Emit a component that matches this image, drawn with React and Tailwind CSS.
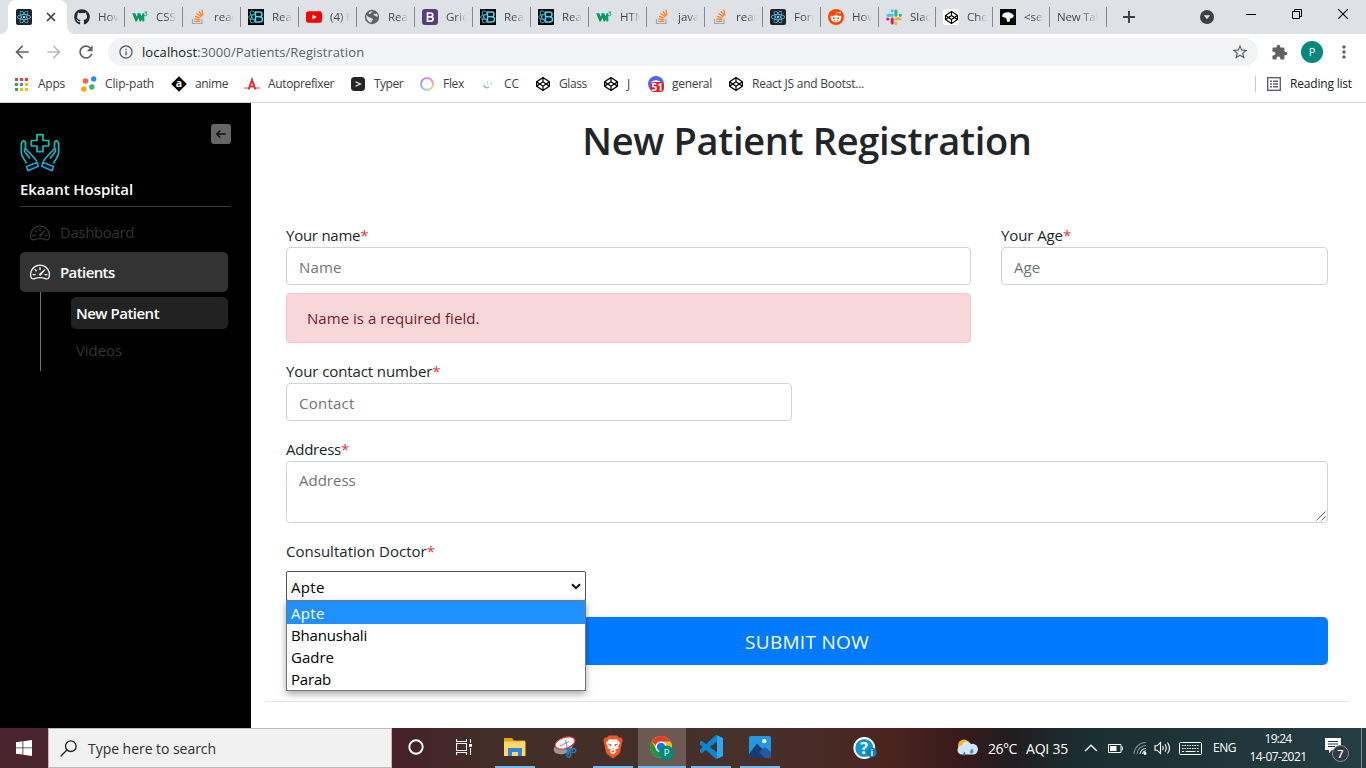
import { BsSpeedometer2 } from "react-icons/bs";
import { FaReact, FaGithub, FaRedditAlien, FaCodepen } from "react-icons/fa";
import { MdArrowBack, MdArrowForward, MdRefresh, MdInfoOutline, MdStarBorder, MdExtension, MdMoreVert } from "react-icons/md";

const ReactIcon = () => (
  <span className="flex size-4 items-center justify-center rounded-[2px] bg-[#20232a]">
    <FaReact className="size-[14px] text-[#61dafb]" />
  </span>
);
const GithubIcon = () => <FaGithub className="size-4 text-[#24292e]" />;
const W3Icon = () => (
  <svg viewBox="0 0 16 16" className="size-4">
    <path d="M.2 4.200H3.300L4.600 7.800 5.700 5.400 5.200 4.200H8.200L9.300 7.300 10.800 4.200H12.300V12.500H10.300V9.800L9 12.500H7.700L6.400 9 4.800 12.500H3.500z" fill="#059862" />
    <path d="M12.600 3h2.300l-1.200 1.400c1.600.1 1.500 2.400-.1 2.400-.8 0-1.200-.4-1.300-.9" fill="none" stroke="#059862" strokeWidth=".9" />
  </svg>
);
const StackIcon = () => (
  <svg viewBox="0 0 16 16" className="size-4" fill="none">
    <path d="M2.500 10v4.500h9.500V10" stroke="#a5a8aa" strokeWidth="1.200" />
    <path d="M4.300 12.300h6M4.400 9.900l5.900.7M5 7.300l5.600 1.700M6.500 4.500l5 3.100M8.800 2.200l3.500 4.600M11.800.7l1.200 5.500" stroke="#f48024" strokeWidth="1.250" />
  </svg>
);
const ReactBootstrapIcon = () => (
  <svg viewBox="0 0 16 16" className="size-4" fill="none" stroke="#41d8f5">
    <rect width="16" height="16" fill="#000" stroke="none" />
    <path d="M7.500 3h4.300c3 0 3 4.600 0 4.700 3.600.2 3.600 5.300 0 5.300H7.500zM8 7.800h4" strokeWidth="1.500" />
    <path d="M7 5.800C3.500 5.300.8 6.500.8 8s2.700 2.700 6.200 2.300M6.500 3.300C4.800 1.700 3.200 1.500 2.500 2.500c-.9 1.300.3 4.700 3 8 1 1.300 1.700 2 2.200 2.300M7 3.500C5.400 4.800 3.600 7.500 2.800 10c-.8 2.600-.2 4 1 3.800C5 13.700 6 12.800 7 11.800" strokeWidth=".9" />
  </svg>
);
const YoutubeIcon = () => (
  <span className="flex size-4 items-center justify-center">
    <svg viewBox="0 0 16 12" className="h-3 w-4"><rect width="16" height="11.500" y=".3" rx="2.500" fill="#f00" /><path d="M6.300 3.500v5l4.400-2.500z" fill="#fff" /></svg>
  </span>
);
const GlobeIcon = () => (
  <svg viewBox="0 0 16 16" className="size-4">
    <circle cx="8" cy="8" r="7.200" fill="#5f6368" />
    <path d="M2.300 6.300 5 8.200c1.500.3 2 .8 3.300 1.200 1 .4.900 1.400-.2 1.900L7.300 13.700C4 13 1.900 10 2.300 6.300zM12.800 4.600c-1 .8-2.700.3-3.300.9-.4.7.9 1.100 2 1.200.7.500 1.200 1.200 2.300.9.100-1.100-.4-2.300-1-3zM5 3.200c1.200-.8 2.600-1.100 3.800-.9-.2 1.300-1.800 1.100-2.100 2.100-.3.800-1.500.7-2.100.2z" fill="#dee1e6" />
  </svg>
);
const BootstrapIcon = () => (
  <svg viewBox="0 0 16 16" className="size-4">
    <rect width="16" height="16" rx="3" fill="#563d7c" />
    <path d="M5.500 4h3.200c2.700 0 2.700 3.600.3 3.900 2.900.3 2.600 4.300-.4 4.300H5.500zM5.800 7.900h3" fill="none" stroke="#fff" strokeWidth="1.700" />
  </svg>
);
const RedditIcon = () => (
  <span className="flex size-4 items-center justify-center rounded-full bg-[#ff4500]">
    <FaRedditAlien className="size-[12px] text-white" />
  </span>
);
const SlackIcon = () => (
  <svg viewBox="0 0 16 16" className="size-4" strokeWidth="3" strokeLinecap="round">
    <path d="M6.200 1.700v.1M2 6.200h4.200" stroke="#36c5f0" />
    <path d="M9.900 2v4.200M14.300 6.200h.1" stroke="#2eb67d" />
    <path d="M9.900 9.900H14M9.900 14.300v.1" stroke="#ecb22e" />
    <path d="M6.200 9.900V14M1.700 9.900h.1" stroke="#e01e5a" />
  </svg>
);
const CodepenIcon = () => (
  <span className="flex size-4 items-center justify-center rounded-[2px] bg-white">
    <FaCodepen className="size-[13px] text-black" />
  </span>
);
const BlackIcon = () => (
  <svg viewBox="0 0 16 16" className="size-4">
    <rect width="16" height="16" fill="#000" />
    <path d="M2 7.500C2.300 4.500 4.500 3.200 8 3.200c3 0 4.200 1.300 6 3.500L12.300 9 9.800 9.700V12.500L7.200 13 6.300 9.300z" fill="#fff" />
  </svg>
);

const tabs = [
  [GithubIcon, "How"], [W3Icon, "CSS"], [StackIcon, "reac"], [ReactBootstrapIcon, "Rea"], [YoutubeIcon, "(4) I"],
  [GlobeIcon, "Rea"], [BootstrapIcon, "Grid"], [ReactBootstrapIcon, "Rea"], [ReactBootstrapIcon, "Rea"], [W3Icon, "HTM"],
  [StackIcon, "java"], [StackIcon, "reac"], [ReactIcon, "Forr"], [RedditIcon, "How"],
];
const narrowTabs = [[SlackIcon, "Slac"], [CodepenIcon, "Cho"], [BlackIcon, "<sel"]];

function Tab({ icon: Icon, label, narrow }) {
  return (
    <div className={`flex h-full shrink-0 items-center pl-[7px] ${narrow ? "w-[57px]" : "w-[58px]"}`}>
      <Icon />
      <span className="ml-2 w-[20px] overflow-hidden whitespace-nowrap text-[11.5px] text-[#45494d] [mask-image:linear-gradient(to_right,#000_50%,transparent)]">{label}</span>
      <span className="ml-auto h-5 w-px bg-[#85888d]" />
    </div>
  );
}

function TabStrip() {
  return (
    <div className="flex h-[34px] bg-[#dee1e6]">
      <div className="w-2 bg-white"><div className="h-full rounded-br-lg bg-[#dee1e6]" /></div>
      <div className="flex w-[59px] shrink-0 items-center rounded-t-lg bg-white pl-2">
        <ReactIcon />
        <svg viewBox="0 0 10 10" className="ml-[14px] size-[10px]"><path d="M1 1l8 8M9 1L1 9" stroke="#3c4043" strokeWidth="1.700" /></svg>
      </div>
      <div className="flex shrink-0 bg-white"><div className="flex rounded-bl-lg bg-[#dee1e6]">
        {tabs.map(([icon, label], i) => <Tab key={i} icon={icon} label={label} />)}
        {narrowTabs.map(([icon, label]) => <Tab key={label} icon={icon} label={label} narrow />)}
      </div></div>
      <div className="flex w-[57px] shrink-0 items-center pl-[7px]">
        <span className="w-[41px] overflow-hidden whitespace-nowrap text-[11.5px] tracking-[-0.2px] text-[#45494d] [mask-image:linear-gradient(to_right,#000_60%,transparent)]">New Tab</span>
        <span className="ml-auto h-5 w-px bg-[#85888d]" />
      </div>
      <div className="flex flex-1 items-center">
        <svg viewBox="0 0 12 12" className="ml-[16px] size-3"><path d="M6 0v12M0 6h12" stroke="#3c4043" strokeWidth="1.900" /></svg>
        <svg viewBox="0 0 14 14" className="ml-[65px] size-[14px]"><circle cx="7" cy="7" r="7" fill="#3c4043" /><path d="M3.800 5.200h6.400L7 9.300z" fill="#dee1e6" /></svg>
        <div className="mb-[6px] ml-8 flex items-center text-black">
          <span className="h-px w-[10px] bg-black" />
          <svg viewBox="0 0 10 10" className="ml-9 size-[10px]" fill="none" stroke="currentColor"><path d="M.5 2.500h7v7h-7zM2.500 2.500v-2h7v7h-2" /></svg>
          <svg viewBox="0 0 10 10" className="ml-9 size-[10px]" stroke="currentColor"><path d="M0 0l10 10M10 0L0 10" strokeWidth="1.100" /></svg>
        </div>
      </div>
    </div>
  );
}

function AddressBar() {
  return (
    <div className="flex h-9 items-center bg-white pl-[12px] text-[#5f6368]">
      <MdArrowBack className="size-5" />
      <MdArrowForward className="ml-[12px] size-5 text-[#bbbdbf]" />
      <MdRefresh className="ml-[12px] size-5" />
      <div className="ml-3 flex h-7 w-[1150px] items-center rounded-full bg-[#f1f3f4] pl-[10px] pr-[9px]">
        <MdInfoOutline className="size-4" />
        <span className="ml-2 pt-px text-[13px] tracking-[0.09px]"><span className="text-[#202124]">localhost</span>:3000/Patients/Registration</span>
        <MdStarBorder className="ml-auto size-[18px]" />
      </div>
      <MdExtension className="ml-[13px] size-[17px]" />
      <span className="ml-[13px] flex size-[22px] items-center justify-center rounded-full bg-[#00897b] text-[11px] text-white">P</span>
      <MdMoreVert className="ml-[11px] size-[20px]" />
    </div>
  );
}

const dots = ["#ea4335", "#ea4335", "#ea4335", "#34a853", "#4285f4", "#fbbc05", "#34a853", "#fbbc05", "#fbbc05"];
const AppsIcon = () => <span className="grid size-[13px] grid-cols-3 gap-[2px]">{dots.map((c, i) => <span key={i} style={{ background: c }} />)}</span>;
const ClipIcon = () => (
  <svg viewBox="0 0 16 16" className="size-4"><circle cx="4.500" cy="5" r="2.800" fill="#ff6347" /><circle cx="12.700" cy="2.900" r="2.700" fill="#1e90ff" /><circle cx="2.800" cy="13" r="2.700" fill="#ffa500" /><circle cx="10.800" cy="11" r="2.700" fill="#3cb371" /></svg>
);
const AnimeIcon = () => (
  <svg viewBox="0 0 16 16" className="size-4"><path d="M8 .2 15.800 8 8 15.800.2 8z" fill="#000" /><text x="8" y="11.300" textAnchor="middle" fontSize="10.500" fontWeight="700" fill="#fff">a</text></svg>
);
const AutoprefixerIcon = () => (
  <svg viewBox="0 0 16 16" className="size-4" fill="none"><path d="M0 12h5M11 12h5" stroke="#e8888a" strokeWidth="1.300" /><path d="M4.600 13.500 8 3.800l3.400 9.700M6 10.500h4" stroke="#dd3735" strokeWidth="2" /></svg>
);
const TyperIcon = () => (
  <svg viewBox="0 0 16 16" className="size-4"><rect x="1" y="1" width="14" height="14" rx="3.500" fill="#242526" /><path d="M5.500 5.700 10.500 8l-5 2.300" fill="none" stroke="#eee" strokeWidth="1.200" /></svg>
);
const FlexIcon = () => (
  <span className="flex size-[14px] rounded-full bg-[conic-gradient(#e58bf0,#f28ab8,#ffd06a,#9fe8d0,#7cc4f7,#b08cf5,#e58bf0)] p-[2px]"><span className="flex-1 rounded-full bg-white" /></span>
);
const CcIcon = () => (
  <svg viewBox="0 0 16 16" className="size-4" fill="none"><path d="M4 8.500c0 2.500 2.500 4 5 2.500" stroke="#9bb8da" strokeWidth="1.500" /><path d="M7.500 5v3.500M10 6.500l2 1.500M12 6.500l-2 1.500" stroke="#b8e4ee" strokeWidth="1.200" /></svg>
);
const PenIcon = () => <FaCodepen className="size-[14px] text-black" />;
const GeneralIcon = () => (
  <svg viewBox="0 0 16 16" className="size-4"><circle cx="8" cy="8" r="8" fill="#5865f2" /><path d="M4 5.500Q8 3 12 5.500L13 8H3z" fill="#fff" /><rect x="2.500" y="6" width="13.500" height="10" rx="4" fill="#e01f26" /><text x="9.200" y="14.600" textAnchor="middle" fontSize="10" fontWeight="700" fill="#fff">51</text></svg>
);

function Bookmark({ icon: Icon, label, width, text }) {
  return (
    <div className={`flex shrink-0 items-center ${width}`}>
      <span className="flex w-4 justify-center"><Icon /></span>
      <span className={`ml-2 whitespace-nowrap ${text}`}>{label}</span>
    </div>
  );
}

function BookmarkBar() {
  return (
    <div className="flex h-[33px] items-center border-b border-[#d5d6d8] bg-white pb-1 pl-[13px] text-[12px] text-[#3c4043]">
      <Bookmark icon={AppsIcon} label="Apps" width="w-[68px]" text="tracking-[-0.25px] pl-px" />
      <Bookmark icon={ClipIcon} label="Clip-path" width="w-[90px]" text="tracking-[-0.16px]" />
      <Bookmark icon={AnimeIcon} label="anime" width="w-[73px]" text="tracking-[-0.38px]" />
      <Bookmark icon={AutoprefixerIcon} label="Autoprefixer" width="w-[106px]" text="tracking-[-0.36px]" />
      <Bookmark icon={TyperIcon} label="Typer" width="w-[69px]" text="tracking-[-0.5px]" />
      <Bookmark icon={FlexIcon} label="Flex" width="w-[61px]" text="tracking-[-0.3px]" />
      <Bookmark icon={CcIcon} label="CC" width="w-[55px]" text="tracking-[-0.1px]" />
      <Bookmark icon={PenIcon} label="Glass" width="w-[68px]" text="tracking-[-0.4px]" />
      <Bookmark icon={PenIcon} label="J" width="w-[45px]" text="" />
      <Bookmark icon={GeneralIcon} label="general" width="w-[80px]" text="tracking-[-0.28px]" />
      <Bookmark icon={PenIcon} label="React JS and Bootst..." width="w-[150px]" text="tracking-[-0.24px]" />
      <span className="ml-auto mr-[11px] h-4 w-px bg-[#c6c8ca]" />
      <svg viewBox="0 0 14 14" className="size-[14px]" fill="none" stroke="#5f6368"><rect x=".7" y=".7" width="12.600" height="12.600" strokeWidth="1.400" /><path d="M3 4.200h2M6 4.200h5M3 7h2M6 7h5M3 9.800h2M6 9.800h5" strokeWidth="1.400" /></svg>
      <span className="ml-2 w-[77px] whitespace-nowrap pl-px tracking-[-0.19px] text-[#202124]">Reading list</span>
    </div>
  );
}

function Hand() {
  return (
    <g>
      <path d="M6.500 30.500C5.500 27 1.500 24 1.300 20V12c.2-4.500 3.700-6 4.200-1.500v5L12 22.500c1.700 2 3.300 3.500 5 6M5.500 15.500c-2 1.200-1 3 .3 4.500l4.200 5.500M5.500 15.500l-.2-5.500" />
      <path d="M6.500 33.500 17 29.500l1.200 3.800L8 37.700z" />
    </g>
  );
}

function Sidebar() {
  return (
    <aside className="flex w-[251px] shrink-0 flex-col bg-black pl-5 text-[15px] text-[#343434]">
      <div className="mt-[21px] flex w-[211px] justify-between">
        <svg viewBox="0 0 40 39" className="mt-[9px] h-[39px] w-10" fill="none" stroke="url(#teal)" strokeWidth="1.700" strokeLinejoin="round">
          <defs><linearGradient id="teal" gradientUnits="userSpaceOnUse" x1="0" y1="0" x2="0" y2="39"><stop stopColor="#10c8a4" /><stop offset="1" stopColor="#14a4e0" /></linearGradient></defs>
          <path d="M17 1.700h6v5.800h5.700v5.500H23v5.700h-6V13h-5.700V7.500H17z" />
          <Hand />
          <g transform="translate(40 0) scale(-1 1)"><Hand /></g>
        </svg>
        <button className="flex size-5 items-center justify-center rounded-[3px] bg-[#666]">
          <svg viewBox="0 0 10 8" className="h-2 w-[10px]" fill="none" stroke="#111" strokeWidth="1.300" strokeLinecap="round" strokeLinejoin="round"><path d="M9.400 4H1M4 .7.700 4 4 7.300" /></svg>
        </button>
      </div>
      <h2 className="mt-[6px] h-6 text-[15px] font-semibold leading-[22px] tracking-[-0.05px] text-white">Ekaant Hospital</h2>
      <div className="mt-1 h-px w-[211px] bg-[#383838]" />
      <div className="mt-[6px] flex h-10 items-center pl-[10px]">
        <BsSpeedometer2 className="size-5" /><span className="mb-px ml-[10px] tracking-[-0.38px]">Dashboard</span>
      </div>
      <div className="mt-[-1px] flex h-10 w-[208px] items-center rounded-[5px] bg-[#333] pl-[10px] font-semibold text-white">
        <BsSpeedometer2 className="size-5" /><span className="ml-[10px] tracking-[-0.6px]">Patients</span>
      </div>
      <div className="ml-5 flex h-[79px] w-[188px] flex-col border-l border-[#737373] pl-[30px] pt-[5px]">
        <div className="flex h-8 items-center rounded-[5px] bg-[#222] pl-[5px] font-semibold tracking-[-0.51px] text-white">New Patient</div>
        <div className="mt-[5px] flex h-8 items-center pl-[5px] tracking-[-0.08px]">Videos</div>
      </div>
    </aside>
  );
}

const Label = ({ children, className = "" }) => (
  <label className={`flex h-6 items-center text-[#212529] ${className}`}><span>{children}<span className="text-[#dc3545]">*</span></span></label>
);
const field = "flex h-[38px] items-center rounded-[4px] border border-[#ced4da] bg-white px-3 pt-[2px] text-[#6c757d]";

function DoctorSelect() {
  return (
    <div className="relative mt-2 h-[30px] w-[300px] text-black">
      <div className="flex h-[30px] items-center rounded-[2px] border border-[#555] bg-white pl-1 pr-1 pt-[2px] tracking-[0.3px]">
        Apte
        <svg viewBox="0 0 10 7" className="mb-[2px] ml-auto h-[7px] w-[10px]"><path d="M1 1.200l4 4 4-4" fill="none" stroke="#111" strokeWidth="2" /></svg>
      </div>
      <ul className="absolute left-0 top-[29px] z-10 w-[300px] border border-[#767676] bg-white leading-[22px] shadow-[0_3px_7px_rgba(0,0,0,0.35)]">
        <li className="h-[23px] bg-[#1e90ff] pl-1 pt-[1px] tracking-[0.3px] text-white">Apte</li>
        <li className="h-[22px] pl-1 tracking-[-0.19px]">Bhanushali</li>
        <li className="h-[22px] pl-1">Gadre</li>
        <li className="h-[22px] pl-1 tracking-[-0.2px]">Parab</li>
      </ul>
    </div>
  );
}

function Registration() {
  return (
    <main className="flex flex-1 flex-col bg-white text-[15px]">
      <h1 className="mt-[9px] h-[58px] pr-[3px] text-center text-[38px] font-semibold leading-[56px] tracking-[-0.33px] text-[#212529]">New Patient Registration</h1>
      <form className="ml-[35px] mt-[53px] flex w-[1042px] flex-col">
        <div className="flex justify-between">
          <div className="w-[685px]">
            <Label className="tracking-[-0.25px]">Your name</Label>
            <div className={`${field} tracking-[0.2px]`}>Name</div>
            <div className="mt-2 flex h-[50px] items-center rounded-[4px] border border-[#f5c6cb] bg-[#f8d7da] pl-5 pt-px tracking-[0.04px] text-[#721c24]">Name is a required field.</div>
          </div>
          <div className="w-[327px]">
            <Label className="tracking-[-0.1px]">Your Age</Label>
            <div className={field}>Age</div>
          </div>
        </div>
        <Label className="mt-4 tracking-[-0.1px]">Your contact number</Label>
        <div className={`${field} w-[506px] tracking-[0.25px]`}>Contact</div>
        <Label className="mt-4 tracking-[-0.24px]">Address</Label>
        <div className="flex h-[62px] rounded-[4px] border border-[#ced4da] pl-3 pt-[7px] leading-[23px] text-[#6c757d]">
          <span>Address</span>
          <svg viewBox="0 0 10 10" className="mb-px ml-auto mr-px size-[10px] self-end" stroke="#666"><path d="M.5 9.500l9-9M5.500 9.500l4-4" /></svg>
        </div>
        <Label className="mt-4 tracking-[0.02px]">Consultation Doctor</Label>
        <DoctorSelect />
        <button type="button" className="mt-4 h-12 rounded-[5px] bg-[#007bff] pt-[2px] text-[19px] tracking-[0.3px] text-white">SUBMIT NOW</button>
      </form>
      <div className="ml-[15px] mt-9 h-px w-[1082px] bg-[#e3e4e5]" />
    </main>
  );
}

function Task({ children, active, open, width = "w-[49px]" }) {
  return (
    <div className={`flex h-10 shrink-0 flex-col items-center ${width}`}>
      <div className={`flex h-full flex-col items-center ${active ? "w-12 bg-[#6b5a54]" : "w-10"}`}>
        <span className="flex h-[37px] flex-1 items-center">{children}</span>
        <span className={`h-[2px] w-full ${open ? "bg-[#76b9ed]" : ""}`} />
      </div>
    </div>
  );
}

function Taskbar() {
  return (
    <footer className="flex h-10 bg-[linear-gradient(90deg,#4a2530_0%,#46202a_29%,#432d27_35%,#46302a_55%,#4a2520_65%,#3a1a1b_70%,#221d1f_74%,#1b2d30_79%,#243e43_100%)] text-white">
      <div className="flex w-12 items-center justify-center">
        <svg viewBox="0 0 16 16" className="size-4" fill="#fff"><path d="M0 2.200 6.500 1.300v6.200H0zM7.300 1.200 16 0v7.500H7.300zM0 8.300h6.500v6.300L0 13.700zM7.300 8.300H16V16l-8.700-1.200z" /></svg>
      </div>
      <div className="flex w-[344px] items-center border border-[#bdbdbd] bg-[#f1f1f1] pl-[11px] text-[14px] tracking-[-0.04px] text-[#2f2f2f]">
        <svg viewBox="0 0 17 17" className="size-[17px]" fill="none" stroke="#222" strokeWidth="1.300"><circle cx="10.800" cy="6.200" r="5.300" /><path d="M7 10 .7 16.300" /></svg>
        <span className="ml-[11px] pt-px">Type here to search</span>
      </div>
      <div className="flex w-[396px]">
        <Task width="w-12"><svg viewBox="0 0 16 16" className="size-4"><circle cx="8" cy="8" r="6.700" fill="none" stroke="#fff" strokeWidth="1.900" /></svg></Task>
        <Task width="w-12"><svg viewBox="0 0 16 16" className="size-4" fill="none" stroke="#fff"><path d="M.5 0v2.500h10V0M.5 16v-2.500h10V16M.5 4.500h10v7H.5zM14.500 0v4M14.500 9v7" strokeWidth="1.100" /><path d="M13 5h3v2.800h-3z" fill="#fff" stroke="none" /></svg></Task>
        <Task open width="w-[54px]"><svg viewBox="0 0 22 18" className="h-[18px] w-[22px]"><path d="M0 0h8l2 2.500h11V6H0z" fill="#e8a317" /><path d="M0 3.500h21.500V18H0z" fill="#ffd868" /><path d="M4 10h14v8h-4v-4H8v4H4z" fill="#2f86d6" /></svg></Task>
        <Task width="w-[45px]"><svg viewBox="0 0 24 22" className="h-[22px] w-6"><ellipse cx="10" cy="12" rx="9.500" ry="6" fill="#999" transform="rotate(-15 10 12)" /><ellipse cx="12" cy="7" rx="10.300" ry="5.500" fill="#f3f3f3" stroke="#d4373c" strokeWidth="1.100" transform="rotate(-18 12 7)" /><path d="M12.500 4l2 8.500M7 10l9-4.500" stroke="#888" strokeWidth=".9" /><path d="M13 12.500l7 1.500M14.500 12l1 7" stroke="#2878b8" strokeWidth="1.800" /><ellipse cx="20" cy="14.500" rx="2.800" ry="2" fill="none" stroke="#2878b8" strokeWidth="1.400" /><ellipse cx="15.800" cy="18.500" rx="2" ry="2.700" fill="none" stroke="#2878b8" strokeWidth="1.400" /></svg></Task>
        <Task open width="w-[51px] pl-px"><svg viewBox="0 0 20 24" className="h-6 w-5"><path d="M6 .5h8l2.300 2.200 2-.2L19.700 5.500l-.7 2-1.900 9.500c-.4 2-4.300 4.500-7.100 6.500C7.200 21.500 3.300 19 2.900 17L1 7.500l-.7-2 1.400-3 2 .2z" fill="#fb5424" /><path d="M10 4.500 13.500 4l3.500 4-1.800 3.200.3 2-3.500 1.500 1.500 2-3.500 2.700-3.500-2.700 1.500-2-3.500-1.500.3-2L3 8l3.500-4z" fill="#fff" /><path d="M4.800 8.500 8.500 9.300l-.5 2.500zM15.200 8.500l-3.700.8.500 2.500zM8.500 13l1.500 1 1.500-1M8.300 16.200l1.700-1 1.700 1-1.700 1.200z" fill="#fb5424" /></svg></Task>
        <Task open active width="w-[48px]"><svg viewBox="0 0 26 26" className="mt-px size-[26px]"><circle cx="12" cy="12" r="11" fill="#fbc116" /><path d="M2.500 6.500A11 11 0 0 1 21.500 6.500H12A5.500 5.500 0 0 0 6.800 10.300z" fill="#e33b2e" /><path d="M2.500 6.500A11 11 0 0 0 11 23l4-7c-3 1.700-6.500.5-7.700-1.500z" fill="#229342" /><circle cx="12" cy="12" r="5.500" fill="#fff" /><circle cx="12" cy="12" r="4.200" fill="#1a73e8" /><circle cx="17.500" cy="18" r="7.500" fill="#00897b" /><text x="17.500" y="21.300" textAnchor="middle" fontSize="9.500" fill="#fff">P</text></svg></Task>
        <Task open width="w-[50px]"><svg viewBox="0 0 24 24" className="size-6"><path d="M17 0 24 3v18l-7 3L1 9.500V7l1.700-1.300L18 17.500V6.500L2.700 18.300 1 17v-2.500z" fill="#0a86d6" /><path d="M17 0l7 3v18l-7 3c1 0 1-1 1-1.500v-21C18 .7 17.700 0 17 0z" fill="#29a9f1" /></svg></Task>
        <Task open width="w-12"><svg viewBox="0 0 22 22" className="size-[22px]"><rect width="22" height="22" rx="1.500" fill="#2398e0" /><path d="M0 18 8 7.500 22 22H0z" fill="#173b6f" /><path d="M10 16l6-5 6 5v6h-6z" fill="#225ba0" /><circle cx="15.300" cy="5.200" r="2.100" fill="#fff" /></svg></Task>
      </div>
      <div className="flex flex-1 items-center pl-[65px]">
        <svg viewBox="0 0 24 22" className="h-[22px] w-6"><circle cx="11.300" cy="11" r="10" fill="#1497cf" stroke="#fff" strokeWidth="1.800" /><text x="11" y="16.500" textAnchor="middle" fontSize="16" fontWeight="700" fill="#fff">?</text><circle cx="18.800" cy="15.500" r="5" fill="#0b7fb8" /><text x="18.800" y="18.700" textAnchor="middle" fontSize="8.500" fontWeight="700" fill="#fff">i</text></svg>
        <svg viewBox="0 0 22 18" className="ml-[80px] h-[18px] w-[22px]"><circle cx="7" cy="6.500" r="6" fill="#f9b42c" /><path d="M5 15.500a4.500 4.500 0 0 1 0-9 5 5 0 0 1 9-1.500 5.300 5.300 0 0 1 3 10.500z" fill="#cfe6fb" /><path d="M7.500 12.500c1.700 2 .9 4-.5 4s-1.500-2 .5-4zM15 9.500c2.400 2.600 1.200 5-.5 5s-2-2.500.5-5z" fill="#3b86df" /></svg>
        <span className="ml-[9px] w-[38px] whitespace-nowrap text-[14px] tracking-[-0.46px]">26°C</span>
        <span className="w-[58px] whitespace-nowrap text-[14px] tracking-[-0.22px]">AQI 35</span>
        <svg viewBox="0 0 14 8" className="h-2 w-[14px]" fill="none" stroke="#fff" strokeWidth="1.400"><path d="M1 7l6-5.700L13 7" /></svg>
        <svg viewBox="0 0 15 9" className="ml-[10px] h-[9px] w-[15px]"><path d="M.5.500h12.500v8H.5zM13.500 3h1v3h-1" fill="none" stroke="#fff" /><path d="M2 2h6.500v5H2z" fill="#fff" /></svg>
        <svg viewBox="0 0 14 14" className="ml-[10px] size-[14px]" fill="none" strokeWidth="1.100"><path d="M1 13A12 12 0 0 1 13 1.500M4 13a9 9 0 0 1 9-8.500" stroke="#849395" /><path d="M7 13a6 6 0 0 1 6-5.500M9.500 13A3.500 3.500 0 0 1 13 10" stroke="#d5dcdd" /><circle cx="12" cy="12.500" r="1.400" fill="#fff" /></svg>
        <svg viewBox="0 0 17 14" className="ml-[7px] h-[14px] w-[17px]" fill="none" stroke="#fff" strokeWidth="1.100"><path d="M1 4.800h2L6.500 1.500v11L3 9.200H1zM8.500 5q1.500 2 0 4M11 3.300q2.500 3.700 0 7.400M13.500 1.500q4 5.500 0 11" /></svg>
        <svg viewBox="0 0 23 13" className="ml-2 h-[13px] w-[23px]" fill="none" stroke="#fff"><rect x=".5" y=".5" width="22" height="12" rx="1" /><path d="M3 3.500h17M3 6.500h17" strokeDasharray="1.500 1" /><path d="M3 9.500h2M6.500 9.500h10M18 9.500h2" /></svg>
        <span className="ml-[11px] w-[36px] text-[12px] tracking-[-0.48px]">ENG</span>
        <div className="flex w-[58px] flex-col items-center whitespace-nowrap text-[12px] leading-[18px]">
          <span className="tracking-[-0.72px]">19:24</span><span className="tracking-[-0.56px]">14-07-2021</span>
        </div>
        <svg viewBox="0 0 25 25" className="ml-[18px] mt-[5px] size-[25px]"><path d="M0 0h16v12H7l-3 3v-3H0z" fill="#fff" /><path d="M3 3.500h10M3 6h10M3 8.500h7" stroke="#243c41" /><circle cx="15.500" cy="15.500" r="8" fill="#303c40" stroke="#889294" /><text x="15.500" y="19.500" textAnchor="middle" fontSize="11" fontWeight="600" fill="#fff">7</text></svg>
        <span className="ml-auto mr-[4px] h-10 w-px bg-[#7d8b8e]" />
      </div>
    </footer>
  );
}

export default function App() {
  return (
    <div className="flex h-[768px] w-[1366px] flex-col overflow-hidden bg-white font-['Open_Sans',sans-serif]">
      <TabStrip />
      <AddressBar />
      <BookmarkBar />
      <div className="flex h-[625px]">
        <Sidebar />
        <Registration />
      </div>
      <Taskbar />
    </div>
  );
}
